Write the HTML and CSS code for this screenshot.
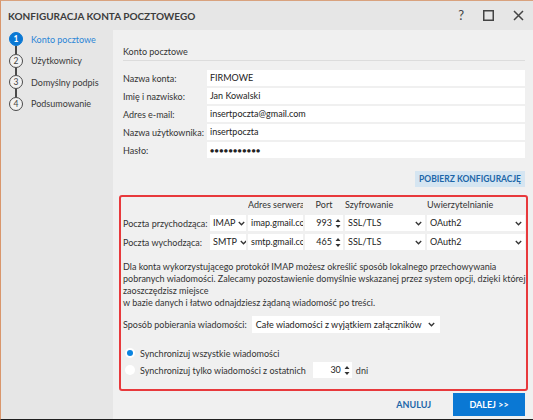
FILE: index.html
```html
<!DOCTYPE html>
<html lang="pl">
<head>
  <meta charset="UTF-8">
  <title>Konfiguracja konta pocztowego</title>
  <link rel="stylesheet" href="styles.css">
</head>
<body>
  <div class="window">
    <div class="titlebar">
      <span class="title">KONFIGURACJA KONTA POCZTOWEGO</span>
      <div class="controls">
        <span class="help">?</span>
        <svg width="11" height="11" viewBox="0 0 11 11"><rect x="0.75" y="0.75" width="9.5" height="9.5" fill="none" stroke="#444" stroke-width="1.5"/></svg>
        <svg width="11" height="11" viewBox="0 0 11 11"><path d="M1 1L10 10M10 1L1 10" stroke="#444" stroke-width="1.5"/></svg>
      </div>
    </div>
    <div class="main">
      <div class="steps">
        <div class="step active"><span class="num">1</span><span class="step-label">Konto pocztowe</span></div>
        <div class="connector"></div>
        <div class="step"><span class="num">2</span><span class="step-label">Użytkownicy</span></div>
        <div class="connector"></div>
        <div class="step"><span class="num">3</span><span class="step-label">Domyślny podpis</span></div>
        <div class="connector"></div>
        <div class="step"><span class="num">4</span><span class="step-label">Podsumowanie</span></div>
      </div>
      <div class="content">
        <div class="section-title">Konto pocztowe</div>
        <div class="form">
          <div class="form-row"><span class="label">Nazwa konta:</span><div class="field">FIRMOWE</div></div>
          <div class="form-row"><span class="label">Imię i nazwisko:</span><div class="field">Jan Kowalski</div></div>
          <div class="form-row"><span class="label">Adres e-mail:</span><div class="field">insertpoczta@gmail.com</div></div>
          <div class="form-row"><span class="label">Nazwa użytkownika:</span><div class="field">insertpoczta</div></div>
          <div class="form-row"><span class="label">Hasło:</span><div class="field password">●●●●●●●●●●●</div></div>
        </div>
        <div class="fetch-row"><span class="fetch-btn">POBIERZ KONFIGURACJĘ</span></div>
        <div class="server-box">
          <div class="server-grid">
            <span></span>
            <span></span>
            <span class="head clip">Adres serwera</span>
            <span class="head center">Port</span>
            <span class="head">Szyfrowanie</span>
            <span class="head">Uwierzytelnianie</span>

            <span class="label">Poczta przychodząca:</span>
            <div class="field select">IMAP<svg class="chev" width="7" height="5" viewBox="0 0 7 5"><path d="M0.8 1L3.5 3.8L6.2 1" fill="none" stroke="#333" stroke-width="1.3"/></svg></div>
            <div class="field clip">imap.gmail.com</div>
            <div class="field num-field">993<svg class="spin" width="6" height="11" viewBox="0 0 6 11"><path d="M0.5 4L3 1L5.5 4Z M0.5 7L3 10L5.5 7Z" fill="#333"/></svg></div>
            <div class="field select">SSL/TLS<svg class="chev" width="7" height="5" viewBox="0 0 7 5"><path d="M0.8 1L3.5 3.8L6.2 1" fill="none" stroke="#333" stroke-width="1.3"/></svg></div>
            <div class="field select">OAuth2<svg class="chev" width="7" height="5" viewBox="0 0 7 5"><path d="M0.8 1L3.5 3.8L6.2 1" fill="none" stroke="#333" stroke-width="1.3"/></svg></div>

            <span class="label">Poczta wychodząca:</span>
            <div class="field select">SMTP<svg class="chev" width="7" height="5" viewBox="0 0 7 5"><path d="M0.8 1L3.5 3.8L6.2 1" fill="none" stroke="#333" stroke-width="1.3"/></svg></div>
            <div class="field clip">smtp.gmail.com</div>
            <div class="field num-field">465<svg class="spin" width="6" height="11" viewBox="0 0 6 11"><path d="M0.5 4L3 1L5.5 4Z M0.5 7L3 10L5.5 7Z" fill="#333"/></svg></div>
            <div class="field select">SSL/TLS<svg class="chev" width="7" height="5" viewBox="0 0 7 5"><path d="M0.8 1L3.5 3.8L6.2 1" fill="none" stroke="#333" stroke-width="1.3"/></svg></div>
            <div class="field select">OAuth2<svg class="chev" width="7" height="5" viewBox="0 0 7 5"><path d="M0.8 1L3.5 3.8L6.2 1" fill="none" stroke="#333" stroke-width="1.3"/></svg></div>
          </div>
          <p class="info">Dla konta wykorzystującego protokół IMAP możesz określić sposób lokalnego przechowywania<br>pobranych wiadomości. Zalecamy pozostawienie domyślnie wskazanej przez system opcji, dzięki której<br>zaoszczędzisz miejsce<br>w bazie danych i łatwo odnajdziesz żądaną wiadomość po treści.</p>
          <div class="mode-row">
            <span class="label">Sposób pobierania wiadomości:</span>
            <div class="field select mode">Całe wiadomości z wyjątkiem załączników<svg class="chev" width="7" height="5" viewBox="0 0 7 5"><path d="M0.8 1L3.5 3.8L6.2 1" fill="none" stroke="#333" stroke-width="1.3"/></svg></div>
          </div>
          <div class="radios">
            <div class="radio-row"><span class="radio checked"></span>Synchronizuj wszystkie wiadomości</div>
            <div class="radio-row"><span class="radio"></span>Synchronizuj tylko wiadomości z ostatnich
              <div class="field num-field days">30<svg class="spin" width="6" height="11" viewBox="0 0 6 11"><path d="M0.5 4L3 1L5.5 4Z M0.5 7L3 10L5.5 7Z" fill="#333"/></svg></div>
              <span>dni</span>
            </div>
          </div>
        </div>
        <div class="actions">
          <span class="cancel-btn">ANULUJ</span>
          <span class="next-btn">DALEJ &gt;&gt;</span>
        </div>
      </div>
    </div>
  </div>
</body>
</html>
```

FILE: styles.css
```css
* {
  margin: 0;
  padding: 0;
  box-sizing: border-box;
}

body {
  font-family: 'Lato', 'Open Sans', sans-serif;
  font-size: 9px;
  color: #333;
  background: #e6e6e6;
}

.window {
  width: 533px;
  height: 420px;
  display: flex;
  flex-direction: column;
  background: #e6e6e6;
  border-left: 1px solid #d9966c;
  border-top: 1px solid #d9a27e;
  border-bottom: 1px solid #1e1e1e;
  overflow: hidden;
}

.titlebar {
  height: 29px;
  flex-shrink: 0;
  display: flex;
  align-items: center;
  justify-content: space-between;
  padding: 0 9px 0 7px;
}

.title {
  font-size: 10px;
  font-weight: 700;
  color: #3c3c3c;
}

.controls {
  display: flex;
  align-items: center;
  gap: 19px;
}

.help {
  font-size: 13px;
  color: #444;
  line-height: 1;
}

.main {
  flex: 1;
  display: flex;
  min-height: 0;
}

/* sidebar */

.steps {
  width: 112px;
  flex-shrink: 0;
  padding: 2px 0 0 8px;
}

.step {
  display: flex;
  align-items: center;
  height: 14px;
  gap: 8px;
}

.num {
  width: 14px;
  height: 14px;
  flex-shrink: 0;
  border-radius: 50%;
  border: 1.3px solid #4a4a4a;
  display: flex;
  align-items: center;
  justify-content: center;
  font-size: 8.5px;
  color: #444;
  background: #f2f2f2;
}

.step-label {
  color: #3a3a3a;
  white-space: nowrap;
}

.step.active .num {
  background: #0a78d4;
  border-color: #0a78d4;
  color: #fff;
  font-weight: 700;
}

.step.active .step-label {
  color: #2a85d6;
}

.connector {
  width: 1.3px;
  height: 7.6px;
  margin-left: 6.4px;
  background: #4a4a4a;
}

/* content */

.content {
  flex: 1;
  min-width: 0;
  overflow: hidden;
  background: #f0f0f0;
  padding: 14px 8px 0 10px;
  display: flex;
  flex-direction: column;
}

.section-title {
  line-height: 16px;
  color: #333;
  border-bottom: 1px solid #dcdcdc;
  margin-bottom: 9px;
}

.label {
  white-space: nowrap;
}

.form {
  display: flex;
  flex-direction: column;
  gap: 2px;
}

.form-row {
  display: flex;
  align-items: center;
  height: 16px;
}

.form-row .label {
  width: 84px;
  flex-shrink: 0;
}

.field {
  background: #fff;
  height: 16px;
  line-height: 16px;
  padding: 0 3px;
  color: #222;
  white-space: nowrap;
  overflow: hidden;
}

.form-row .field {
  flex: 1;
}

.password {
  font-size: 7px;
  letter-spacing: 0.4px;
}

.fetch-row {
  display: flex;
  justify-content: flex-end;
  margin-top: 13px;
}

.fetch-btn {
  background: #d5e5f1;
  color: #1b66a8;
  font-weight: 700;
  font-size: 8.5px;
  height: 16px;
  line-height: 16px;
  padding: 0 4px;
}

/* server box */

.server-box {
  margin: 8px -3px 0 -4px;
  border: 2px solid #e8393c;
  border-radius: 3px;
  padding: 1px 1px 11px 2px;
  height: 196px;
  flex-shrink: 0;
}

.server-grid {
  display: grid;
  grid-template-columns: 85px 36px 55px 38px 80px 1fr;
  grid-template-rows: 14px 16px 16px;
  column-gap: 2px;
  row-gap: 3px;
  align-items: center;
}

.head {
  line-height: 14px;
  white-space: nowrap;
}

.center {
  text-align: center;
}

.clip {
  overflow: hidden;
  white-space: nowrap;
}

.select {
  display: flex;
  align-items: center;
  justify-content: space-between;
}

.chev {
  flex-shrink: 0;
  margin-left: 3px;
}

.num-field {
  display: flex;
  align-items: center;
  justify-content: flex-end;
  gap: 3px;
  padding-right: 2px;
}

.info {
  margin-top: 11px;
  line-height: 12px;
  white-space: nowrap;
}

.mode-row {
  display: flex;
  align-items: center;
  gap: 5px;
  margin-top: 7px;
  height: 17px;
}

.mode {
  width: 188px;
  height: 17px;
  padding: 0 5px 0 4px;
}

.radios {
  margin-top: 12px;
  display: flex;
  flex-direction: column;
  gap: 1px;
  padding-left: 2px;
}

.radio-row {
  display: flex;
  align-items: center;
  height: 16px;
  white-space: nowrap;
}

.radio {
  width: 10px;
  height: 10px;
  flex-shrink: 0;
  border-radius: 50%;
  background: #fff;
  margin-right: 5px;
  position: relative;
}

.radio.checked::after {
  content: '';
  position: absolute;
  left: 2px;
  top: 2px;
  width: 6px;
  height: 6px;
  border-radius: 50%;
  background: #0a84e0;
}

.days {
  width: 39px;
  flex-shrink: 0;
  margin: 0 4px 0 7px;
}

/* bottom buttons */

.actions {
  display: flex;
  justify-content: flex-end;
  align-items: center;
  margin-top: 2px;
  gap: 22px;
}

.cancel-btn {
  color: #1b66a8;
  font-weight: 700;
  font-size: 9px;
}

.next-btn {
  width: 72px;
  height: 23px;
  background: #0a78d4;
  color: #fff;
  font-weight: 700;
  font-size: 9px;
  display: flex;
  align-items: center;
  justify-content: center;
}
```
